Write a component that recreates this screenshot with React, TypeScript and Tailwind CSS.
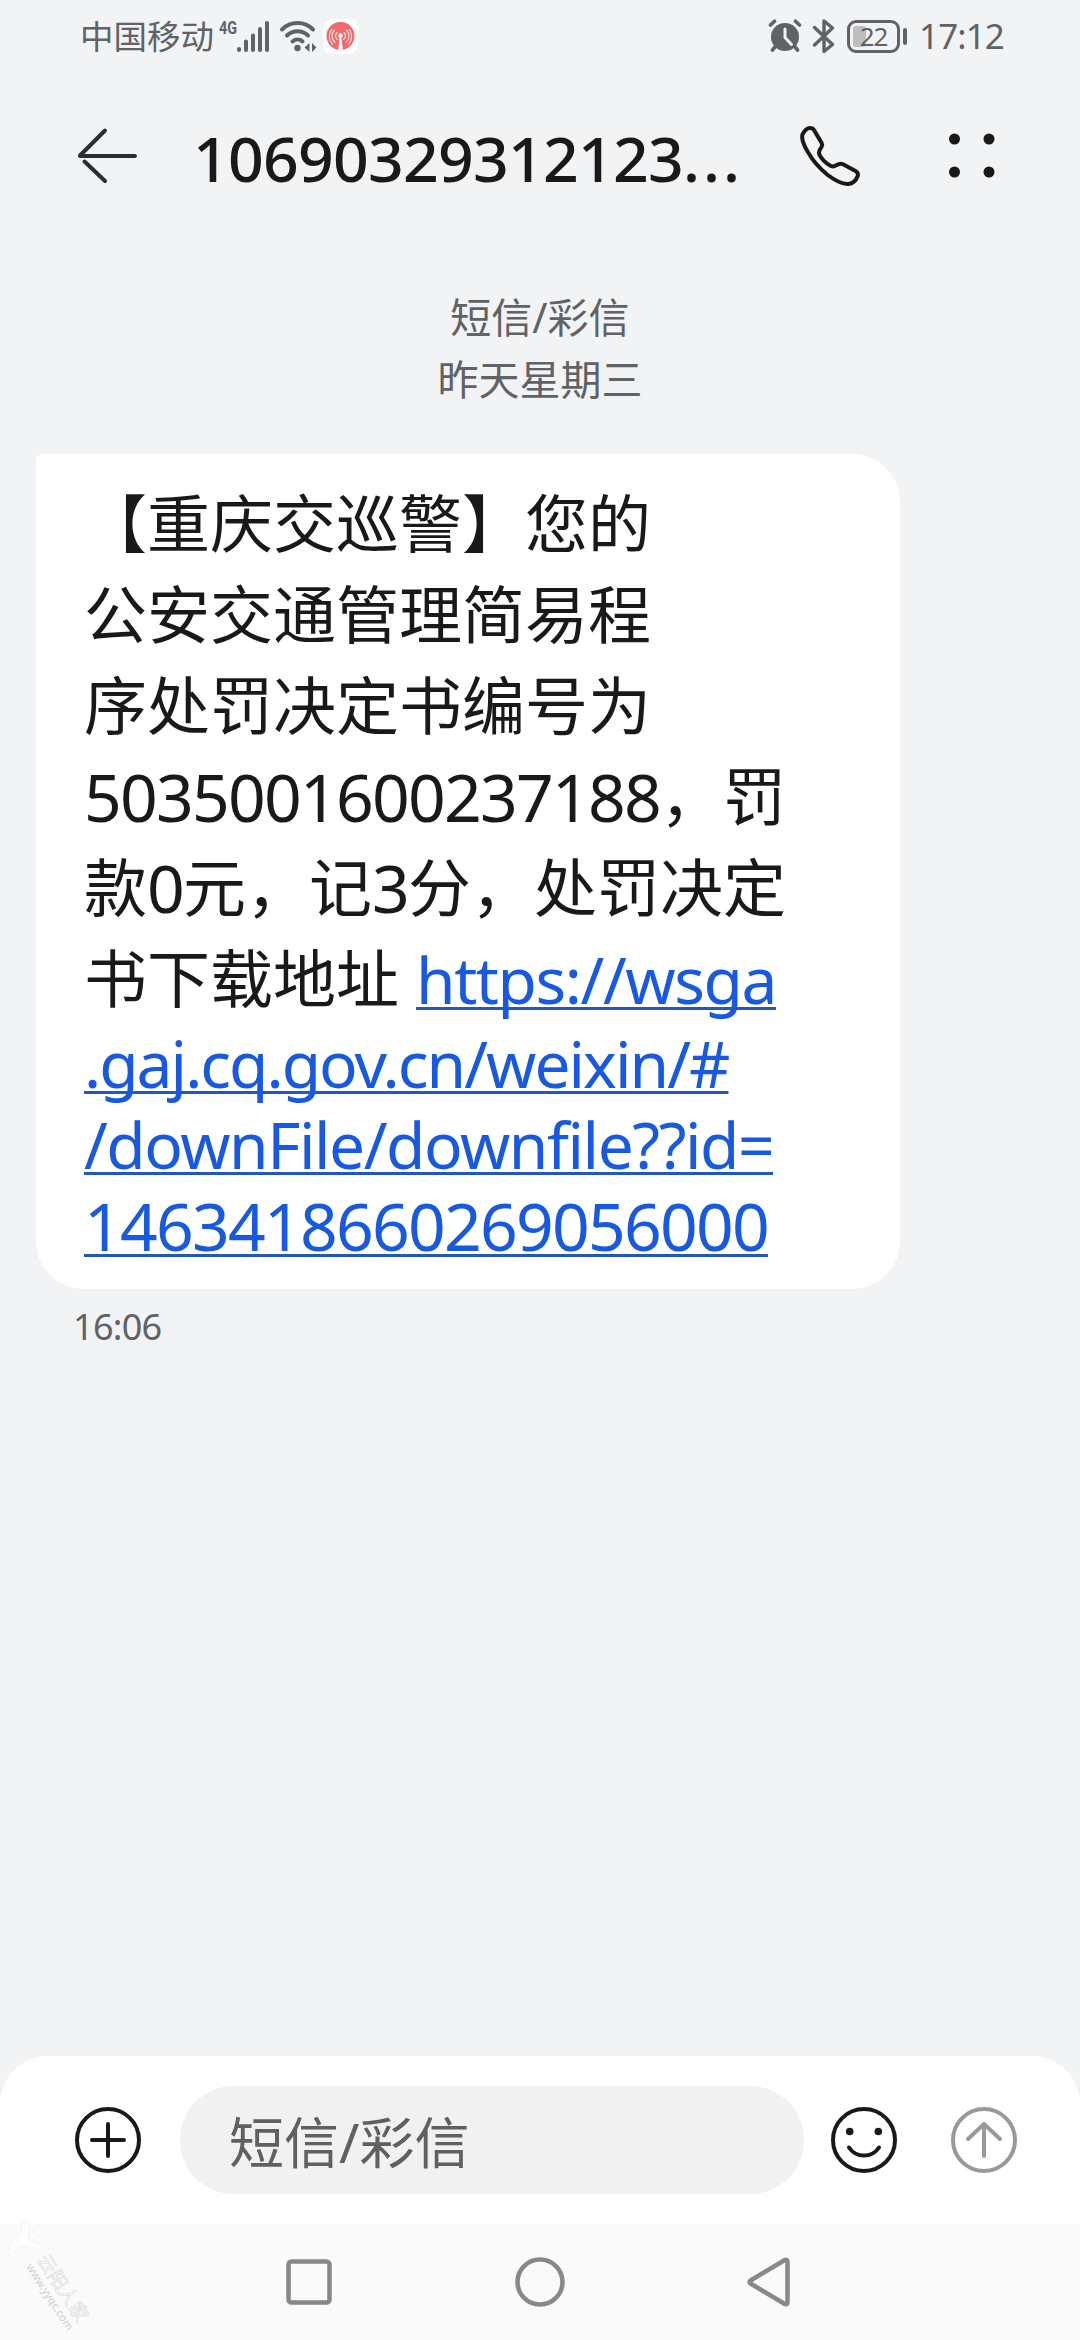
import type { ReactNode } from 'react'

const messageLines = ['【重庆交巡警】您的', '公安交通管理简易程', '序处罚决定书编号为']

function Latin({ children }: { children: ReactNode }) {
  return <span className="align-[-2px] text-[66px] leading-none tracking-[-1.75px]">{children}</span>
}

function LinkText({ children, className }: { children: ReactNode; className: string }) {
  return (
    <span
      className={`underline decoration-[#2458b8] decoration-[3px] underline-offset-[3px] [text-decoration-skip-ink:none] ${className}`}
    >
      {children}
    </span>
  )
}

function StatusBar() {
  return (
    <div className="flex h-[72px] items-center pl-[80px] pr-[76px] text-[#606265]">
      <span className="text-[33.5px] leading-[40px]">中国移动</span>
      <svg className="ml-[5px] h-[44px] w-[54px]" viewBox="0 0 54 44">
        <text x="0" y="20" fontSize="18" fontWeight="700" fontFamily="Roboto" fill="#606265" textLength="18" lengthAdjust="spacingAndGlyphs">
          4G
        </text>
        <g stroke="#606265" strokeWidth="4" strokeLinecap="round">
          <path d="M20 35v1M27 27.500v8.500M34 21.500v14.500M41 15v21M48 9v27" />
        </g>
      </svg>
      <svg className="ml-[5px] h-[44px] w-[42px]" viewBox="0 0 42 44" fill="none" stroke="#606265" strokeLinecap="round">
        <path d="M4 15.500a22 22 0 0 1 31 0" strokeWidth="4" />
        <path d="M9 21.500a15 15 0 0 1 21 0" strokeWidth="4" />
        <path d="M14.500 27.500a7.500 7.500 0 0 1 10 0" strokeWidth="4" />
        <circle cx="19.500" cy="34" r="3.200" fill="#606265" stroke="none" />
        <path d="M26.500 33.500l5-4.500v9zM34 29l4.500 4.500-4.500 4.500z" fill="#606265" stroke="none" />
      </svg>
      <svg className="ml-[3px] h-[35px] w-[35px]" viewBox="0 0 35 35">
        <rect width="35" height="35" rx="9" fill="#fff" />
        <circle cx="17.500" cy="17" r="14" fill="#f06a6c" />
        <g fill="none" stroke="#fff" strokeWidth="1.100" strokeLinecap="round">
          <path d="M14.500 20.500a4.500 4.500 0 0 1-.5-7M20.500 20.500a4.500 4.500 0 0 0 .5-7M12 23.500a8.500 8.500 0 0 1-.5-12.500M23 23.500a8.500 8.500 0 0 0 .5-12.500M9.500 25.500a12 12 0 0 1-1-15M25.500 25.500a12 12 0 0 0 1-15" opacity=".8" />
        </g>
        <circle cx="17.500" cy="16.500" r="2.300" fill="#fff" />
        <path d="M16.700 18h1.600l1.500 13.500h-4.600z" fill="#fff" />
      </svg>

      <svg className="ml-auto h-[44px] w-[34px]" viewBox="0 0 34 44">
        <circle cx="17" cy="23" r="14" fill="#606265" />
        <path d="M2.500 11l4-3.800M31.500 11l-4-3.800M7 33l-2.500 3M27 33l2.500 3" stroke="#606265" strokeWidth="3.600" strokeLinecap="round" />
        <path d="M17 15v8.500l6.500 7" fill="none" stroke="#f1f3f5" strokeWidth="3" strokeLinecap="round" strokeLinejoin="round" />
      </svg>
      <svg className="ml-[10px] h-[44px] w-[24px]" viewBox="0 0 24 44" fill="none" stroke="#606265" strokeWidth="3.400" strokeLinecap="round" strokeLinejoin="round">
        <path d="M2.500 13.500l18 17-8.500 7V7l8.500 7-18 17" />
      </svg>
      <div className="ml-[11px] flex items-center gap-[3px]">
        <div className="relative flex h-[33px] w-[53px] items-center justify-center rounded-[9px] border-[3px] border-[#606265]">
          <div className="absolute left-[3px] top-[3px] h-[21px] w-[13px] rounded-[3px] bg-[#bcbec0]" />
          <span className="relative text-[26px] leading-none tracking-[-1px]">22</span>
        </div>
        <div className="h-[17px] w-[4px] rounded-full bg-[#606265]" />
      </div>
      <span className="ml-[12px] text-[35px] leading-[40px] tracking-[-0.9px]">17:12</span>
    </div>
  )
}

function Header() {
  return (
    <header className="flex h-[168px] items-center pl-[76px] pr-[76px] text-[#191919]">
      <svg className="h-[60px] w-[64px] shrink-0" viewBox="0 0 64 60" fill="none" stroke="#2c2d2e" strokeWidth="4" strokeLinecap="round">
        <path d="M4 30h55M4 29.500l25-25M8.500 35.500l20.500 19.500" />
      </svg>
      <h1 className="ml-[53px] w-[560px] whitespace-nowrap pt-[3px] text-[62.5px] font-medium leading-[72px] tracking-[-0.75px]">
        10690329312123<span className="tracking-[3px]">...</span>
      </h1>
      <svg className="ml-[45px] h-[64px] w-[64px] shrink-0" viewBox="471 40 192 192" fill="none" stroke="#191919" strokeWidth="12" strokeLinejoin="round">
        <path d="M484 72Q494 52 507 52Q515 52 519 58L542 97Q545 102 542 108L536 118Q532 126 536 134Q548 154 566 164Q572 168 578 167L592 161Q600 158 606 161L645 182Q653 187 650 196Q642 218 622 220Q600 222 560 193Q520 160 500 123Q480 90 484 72Z" />
      </svg>
      <svg className="ml-auto h-[64px] w-[64px] shrink-0" viewBox="0 0 64 64" fill="#191919">
        <circle cx="14.500" cy="15" r="5.500" />
        <circle cx="49" cy="15" r="5.500" />
        <circle cx="14.500" cy="48" r="5.500" />
        <circle cx="49" cy="48" r="5.500" />
      </svg>
    </header>
  )
}

function MessageBubble() {
  return (
    <div className="ml-[36px] h-[835px] w-[864px] whitespace-nowrap rounded-[48px] rounded-tl-[6px] bg-white pl-[48px] pt-[23px] text-[63px] text-[#191919]">
      {messageLines.map((line) => (
        <div key={line} className="h-[91px] leading-[91px]">
          {line}
        </div>
      ))}
      <div className="h-[91px] leading-[91px]">
        <Latin>5035001600237188</Latin>，罚
      </div>
      <div className="h-[91px] leading-[91px]">
        款<Latin>0</Latin>元，记<Latin>3</Latin>分，处罚决定
      </div>
      <div className="flex h-[93px] leading-[91px]">
        <span className="w-[332px]">书下载地址</span>
        <a className="pt-[2px] text-[64px] text-[#1759e0]">
          <LinkText className="tracking-[-1.4px]">https://wsga</LinkText>
        </a>
      </div>
      <a className="block text-[64px] text-[#1759e0]">
        <div className="h-[84px] leading-[77px]">
          <LinkText className="tracking-[-1.95px]">.gaj.cq.gov.cn/weixin/#</LinkText>
        </div>
        <div className="h-[81px] leading-[71px]">
          <LinkText className="tracking-[-1.45px]">/downFile/downfile??id=</LinkText>
        </div>
        <div className="h-[81px] leading-[70px]">
          <LinkText className="text-[66px] tracking-[-1.75px]">1463418660269056000</LinkText>
        </div>
      </a>
    </div>
  )
}

function ComposeBar() {
  return (
    <div className="flex h-[168px] items-center rounded-t-[48px] bg-white pl-[75px] pr-[63px]">
      <svg className="h-[66px] w-[66px]" viewBox="0 0 66 66" fill="none" stroke="#191919" strokeWidth="4" strokeLinecap="round">
        <circle cx="33" cy="33" r="31" />
        <path d="M17 33h32M33 17v32" />
      </svg>
      <div className="ml-[39px] flex h-[108px] w-[624px] items-center rounded-full bg-[#f1f1f1] pl-[49px] pt-[4px] text-[55px] text-[#606060]">
        短信/彩信
      </div>
      <svg className="ml-[27px] h-[66px] w-[66px]" viewBox="0 0 66 66" fill="none" stroke="#191919" strokeWidth="4" strokeLinecap="round">
        <circle cx="33" cy="33" r="31" />
        <circle cx="18.700" cy="24.500" r="3.800" fill="#191919" stroke="none" />
        <circle cx="47.300" cy="24.500" r="3.800" fill="#191919" stroke="none" />
        <path d="M18 40.500a18 18 0 0 0 30 0" />
      </svg>
      <svg className="ml-auto h-[66px] w-[66px]" viewBox="0 0 66 66" fill="none" stroke="#999" strokeWidth="4" strokeLinecap="round" strokeLinejoin="round">
        <circle cx="33" cy="33" r="31" />
        <path d="M33 49V17M17 32l16-15 16 15" />
      </svg>
    </div>
  )
}

function NavBar() {
  return (
    <nav className="relative flex h-[116px] items-center bg-[#fafafa] pl-[286px]">
      <svg className="h-[46px] w-[46px]" viewBox="0 0 46 46" fill="none" stroke="#888" strokeWidth="4.500">
        <rect x="2.500" y="2.500" width="41" height="41" rx="3" />
      </svg>
      <svg className="ml-[183px] h-[50px] w-[50px]" viewBox="0 0 50 50" fill="none" stroke="#888" strokeWidth="4.500">
        <circle cx="25" cy="25" r="22.500" />
      </svg>
      <svg className="ml-[182px] h-[50px] w-[43px]" viewBox="0 0 43 50" fill="none" stroke="#888" strokeWidth="4.500" strokeLinejoin="round">
        <path d="M3.500 23.500L37 3.500q3.500-2 3.500 1.500v40q0 3.500-3.500 1.500L3.500 26.500q-2-1.500 0-3z" />
      </svg>

      {/* Site mark */}
      <svg className="absolute left-[5px] top-[-6px] h-[46px] w-[48px]" viewBox="0 0 48 46" fill="#fefcfc" stroke="#f6efef" strokeWidth=".8">
        <path d="M17 4q8-2 8 6l-2 12q14 2 23 16q-18-12-30-9q-8 3-6 7q5-1 5 3q-2 4-7 1q-8-10 0-19q10-4 9-17z" />
        <circle cx="34" cy="13" r="4.500" />
      </svg>
      <div className="absolute left-[50px] top-[27px] flex origin-top-left rotate-[57deg] flex-col whitespace-nowrap">
        <span className="text-[19px] leading-[19px] text-[#fafafa] [-webkit-text-stroke:0.6px_#dadada]">云阳人家</span>
        <span className="text-[11px] leading-[11px] text-[#cfcfcf]">www.yyqc.com</span>
      </div>
    </nav>
  )
}

export default function App() {
  return (
    <div className="flex h-[2340px] w-[1080px] flex-col overflow-hidden bg-[#f1f3f5] font-['Noto_Sans','Noto_Sans_CJK_SC',sans-serif]">
      <StatusBar />
      <Header />
      <div className="mt-[46px] text-center text-[41px] leading-[62px] text-[#606265]">
        <p>短信/彩信</p>
        <p>昨天星期三</p>
      </div>
      <div className="h-[44px]" />
      <MessageBubble />
      <p className="ml-[73px] mt-[13px] text-[36px] leading-[50px] tracking-[-0.7px] text-[#606265]">16:06</p>
      <div className="flex-1" />
      <ComposeBar />
      <NavBar />
    </div>
  )
}
